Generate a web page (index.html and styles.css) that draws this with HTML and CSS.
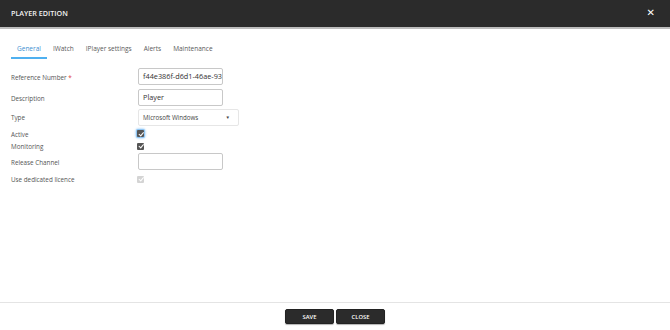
FILE: index.html
```html
<!DOCTYPE html>
<html>
<head>
<meta charset="utf-8">
<link rel="stylesheet" href="styles.css">
</head>
<body>
<div class="dialog">
  <header class="header">
    <span class="title">PLAYER EDITION</span>
    <span class="close">&#x2715;</span>
  </header>
  <nav class="tabs">
    <span class="tab active">General</span>
    <span class="tab">IWatch</span>
    <span class="tab">IPlayer settings</span>
    <span class="tab">Alerts</span>
    <span class="tab">Maintenance</span>
  </nav>
  <main class="form">
    <div class="row h21">
      <label class="lbl">Reference Number <span class="req">*</span></label>
      <div class="input">f44e386f-d6d1-46ae-932</div>
    </div>
    <div class="row h21">
      <label class="lbl">Description</label>
      <div class="input">Player</div>
    </div>
    <div class="row h18">
      <label class="lbl">Type</label>
      <div class="select">Microsoft Windows<span class="caret">&#9660;</span></div>
    </div>
    <div class="row h15">
      <label class="lbl">Active</label>
      <span class="check focus"></span>
    </div>
    <div class="row h10">
      <label class="lbl">Monitoring</label>
      <span class="check"></span>
    </div>
    <div class="row h21">
      <label class="lbl">Release Channel</label>
      <div class="input"></div>
    </div>
    <div class="row h14">
      <label class="lbl">Use dedicated licence</label>
      <span class="check disabled"></span>
    </div>
  </main>
  <footer class="footer">
    <button class="btn">SAVE</button>
    <button class="btn">CLOSE</button>
  </footer>
</div>
</body>
</html>
```

FILE: styles.css
```css
* { box-sizing: border-box; }
html, body { margin: 0; padding: 0; }
body {
  width: 670px;
  height: 330px;
  font-family: "Open Sans", "Noto Sans", sans-serif;
  color: #444;
  background: #fff;
  overflow: hidden;
}
.dialog {
  display: flex;
  flex-direction: column;
  height: 330px;
}
.header {
  height: 29px;
  background: #2b2b2b;
  border-bottom: 2px solid #bdbdbd;
  display: flex;
  align-items: center;
  justify-content: space-between;
  padding: 0 15px 2px 11px;
  flex: none;
}
.title {
  color: #f2f2f2;
  font-size: 7.2px;
  font-weight: 600;
}
.close {
  color: #fff;
  font-size: 10px;
  font-weight: 700;
  font-family: "DejaVu Sans", sans-serif;
  line-height: 1;
}
.tabs {
  display: flex;
  padding: 14px 0 0 11px;
  height: 30px;
  flex: none;
}
.tab {
  font-size: 6.5px;
  color: #5a5a5a;
  padding: 0 6px;
  height: 16px;
  line-height: 11px;
}
.tab.active {
  color: #3d8fd1;
  border-bottom: 2px solid #4fb0f0;
}
.form {
  flex: 1;
  display: flex;
  flex-direction: column;
  padding: 7px 0 0 11px;
}
.row {
  display: flex;
  align-items: center;
  flex: none;
}
.h21 { height: 21px; }
.h18 { height: 18px; }
.h15 { height: 15px; }
.h14 { height: 14px; }
.h10 { height: 10px; }
.lbl {
  width: 127px;
  font-size: 6.3px;
  color: #555;
  padding-top: 1px;
}
.req { color: #e0413a; }
.input {
  width: 85px;
  height: 17px;
  border: 1px solid #c8c8c8;
  border-radius: 2px;
  font-size: 7.3px;
  color: #333;
  padding: 0 4px;
  line-height: 15px;
  white-space: nowrap;
  overflow: hidden;
}
.select {
  width: 101px;
  height: 17px;
  border: 1px solid #e6e6e6;
  border-radius: 2px;
  font-size: 6.2px;
  color: #444;
  padding: 0 4px;
  line-height: 15px;
  display: flex;
  justify-content: space-between;
}
.caret {
  font-size: 4.5px;
  color: #444;
  margin-right: 4px;
}
.check {
  width: 7px;
  height: 7px;
  background: #555;
  border-radius: 1px;
  margin-left: -1px;
  position: relative;
}
.check::after {
  content: "";
  position: absolute;
  left: 2.5px;
  top: 0.5px;
  width: 1.5px;
  height: 3.5px;
  border: solid #fff;
  border-width: 0 1px 1px 0;
  transform: rotate(40deg);
}
.check.focus {
  box-shadow: 0 0 0 1px #8ec5f4, 0 0 2px 1.5px #a9d4f8;
}
.check.disabled { background: #d4d4d4; }
.footer {
  height: 28px;
  flex: none;
  border-top: 1px solid #e4e4e4;
  display: flex;
  justify-content: center;
  align-items: flex-start;
  gap: 2px;
  padding-top: 6px;
}
.btn {
  width: 49px;
  height: 15px;
  background: #2b2b2b;
  color: #fff;
  border: 1px solid #222;
  border-radius: 2px;
  font-family: "Open Sans", sans-serif;
  font-size: 5.8px;
  font-weight: 600;
  padding: 0;
  box-shadow: 0 1px 1px rgba(0,0,0,0.3);
}
```
